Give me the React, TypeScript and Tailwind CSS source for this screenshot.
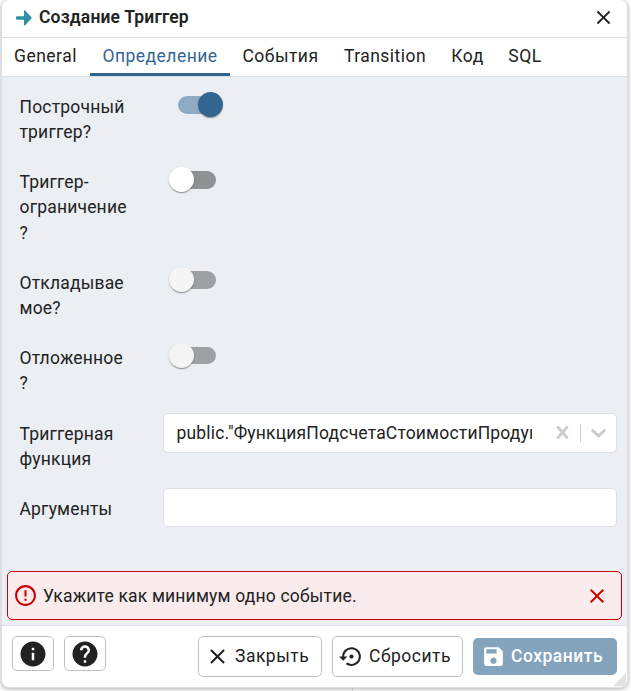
import React, { useState } from 'react';
import clsx from 'clsx';
import {
  MdClose,
  MdErrorOutline,
  MdHelp,
  MdInfo,
  MdSave,
  MdSettingsBackupRestore,
} from 'react-icons/md';

const tabs = [
  { name: 'General', width: 'w-[89px]' },
  { name: 'Определение', width: 'w-[140px]' },
  { name: 'События', width: 'w-[101px]' },
  { name: 'Transition', width: 'w-[108px]' },
  { name: 'Код', width: 'w-[57px]' },
  { name: 'SQL', width: 'w-[58px]' },
];

function TriggerIcon() {
  return (
    <svg className="w-4 h-4" viewBox="0 0 16 16" fill="#2c91a3">
      <path d="M1 6.3h7V1c0-.8.7-1 1.2-.5l6.2 6.7c.4.4.4 1 0 1.4l-6.2 6.7c-.5.5-1.2.3-1.2-.5V9.7H1C.4 9.7 0 9.3 0 8.8V7.2c0-.5.4-.9 1-.9z" />
    </svg>
  );
}

type SwitchProps = {
  checked?: boolean;
  disabled?: boolean;
  onClick?: () => void;
};

function Switch({ checked, disabled, onClick }: SwitchProps) {
  return (
    <button
      role="switch"
      aria-checked={!!checked}
      disabled={disabled}
      onClick={onClick}
      className={clsx(
        'relative block w-[42.5px] h-[17.5px] rounded-full',
        checked ? 'bg-[#8fabc3]' : disabled ? 'bg-[#9fa0a4]' : 'bg-[#909195]'
      )}
    >
      <span
        className={clsx(
          'absolute -top-[4px] w-[25px] h-[25px] rounded-full shadow-[0_2px_1px_-1px_rgba(0,0,0,0.2),0_1px_1px_0_rgba(0,0,0,0.14),0_1px_3px_0_rgba(0,0,0,0.12)]',
          checked ? 'left-[20px] bg-[#326690]' : '-left-[5px]',
          !checked && (disabled ? 'bg-[#f5f5f5]' : 'bg-white')
        )}
      />
    </button>
  );
}

function Field({ label, children }: { label: string; children: React.ReactNode }) {
  return (
    <div className="flex">
      <div className="w-[108px] mr-[35.5px] shrink-0 break-words">{label}</div>
      <div className="flex-1 min-w-0">{children}</div>
    </div>
  );
}

export default function App() {
  const [activeTab, setActiveTab] = useState('Определение');
  const [forEachRow, setForEachRow] = useState(true);
  const [constraint, setConstraint] = useState(false);

  return (
    <div className="h-[691px] overflow-hidden bg-[#fcfcfc] pl-px font-['Roboto',sans-serif] text-[17.5px] leading-[25.1px] tracking-[0.18px] text-[#222]">
      <div className="relative flex flex-col w-[627px] h-[688px] bg-white border border-t-0 border-[#dde0e6] rounded-lg shadow-[0_1px_4px_rgba(0,0,0,0.3)] overflow-hidden">
        <div className="flex items-center h-[38px] shrink-0 pl-[14px] pr-[12.5px] pb-[2px] border-b border-[#dde0e6]">
          <TriggerIcon />
          <span className="ml-[7px] font-semibold tracking-[0.15px]">Создание Триггер</span>
          <button className="ml-auto" aria-label="Close">
            <MdClose className="w-[23px] h-[23px]" />
          </button>
        </div>

        <div className="flex h-[39px] shrink-0 -ml-px border-b border-[#dde0e6]">
          {tabs.map((tab) => (
            <button
              key={tab.name}
              onClick={() => setActiveTab(tab.name)}
              className={clsx(
                'h-[38px] pt-[2px] text-center whitespace-nowrap tracking-[0.47px] border-b-[3px]',
                tab.width,
                activeTab === tab.name ? 'text-[#326690] border-[#326690]' : 'border-transparent'
              )}
            >
              {tab.name}
            </button>
          ))}
        </div>

        <div className="flex-1 min-h-0 flex flex-col bg-[#ebeef3]">
          <div className="flex flex-col gap-[25.2px] pl-[17.5px] pr-[10px] pt-[18px]">
            <Field label="Построчный триггер?">
              <div className="pl-[14.5px] pt-[1px]">
                <Switch checked={forEachRow} onClick={() => setForEachRow(!forEachRow)} />
              </div>
            </Field>
            <Field label="Триггер-ограничение?">
              <div className="pl-[10.5px] pt-[1px]">
                <Switch checked={constraint} onClick={() => setConstraint(!constraint)} />
              </div>
            </Field>
            <Field label="Откладываемое?">
              <div className="pl-[10.5px] pt-[0.5px]">
                <Switch disabled />
              </div>
            </Field>
            <Field label="Отложенное?">
              <div className="pl-[10.5px] pt-[0.5px]">
                <Switch disabled />
              </div>
            </Field>
            <Field label="Триггерная функция">
              <div className="-mt-[9px] -mb-2 flex items-center h-[40px] bg-white border border-[#dde0e6] rounded-[5px]">
                <div className="ml-[12.5px] w-[355.5px] pt-[2px] overflow-hidden whitespace-nowrap">
                  public."ФункцияПодсчетаСтоимостиПродукции"
                </div>
                <svg className="ml-[18px] w-[25px] h-[25px] shrink-0" viewBox="0 0 20 20" fill="#ccc">
                  <path d="M14.348 14.849c-0.469 0.469-1.229 0.469-1.697 0l-2.651-3.030-2.651 3.029c-0.469 0.469-1.229 0.469-1.697 0-0.469-0.469-0.469-1.229 0-1.697l2.758-3.15-2.759-3.152c-0.469-0.469-0.469-1.228 0-1.697s1.228-0.469 1.697 0l2.652 3.031 2.651-3.031c0.469-0.469 1.228-0.469 1.697 0s0.469 1.229 0 1.697l-2.758 3.152 2.758 3.15c0.469 0.469 0.469 1.229 0 1.698z" />
                </svg>
                <span className="ml-[5px] w-px h-[18px] shrink-0 bg-[#ccc]" />
                <svg className="ml-[5px] w-[25px] h-[25px] shrink-0" viewBox="0 0 20 20" fill="#ccc">
                  <path d="M4.516 7.548c0.436-0.446 1.043-0.481 1.576 0l3.908 3.747 3.908-3.747c0.533-0.481 1.141-0.446 1.574 0 0.436 0.445 0.408 1.197 0 1.615-0.406 0.418-4.695 4.502-4.695 4.502-0.217 0.223-0.502 0.335-0.787 0.335s-0.57-0.112-0.789-0.335c0 0-4.287-4.084-4.695-4.502s-0.436-1.17 0-1.615z" />
                </svg>
              </div>
            </Field>
            <Field label="Аргументы">
              <input
                type="text"
                aria-label="Аргументы"
                className="block -mt-[9px] w-full h-[39px] px-3 bg-white border border-[#dde0e6] rounded-[5px] outline-none"
              />
            </Field>
          </div>

          <div className="mt-auto mb-[5px] mx-[5px] flex items-center h-[49px] shrink-0 pl-[5px] pr-[12px] bg-[#faecec] border border-[#cc0000] rounded-[5px]">
            <MdErrorOutline className="w-[25px] h-[25px] text-[#cc0000]" />
            <span className="ml-[5px] pt-[2px]">Укажите как минимум одно событие.</span>
            <button className="ml-auto text-[#cc0000]" aria-label="Dismiss">
              <MdClose className="w-[24px] h-[24px]" />
            </button>
          </div>
        </div>

        <div className="flex items-start h-[62px] shrink-0 pl-[10px] pr-[10px] pt-[10px] border-t border-[#dde0e6] tracking-[0.5px]">
          <button className="flex items-center justify-center w-[42px] h-[35px] border border-[#bac1cd] rounded-[5px]" aria-label="Info">
            <MdInfo className="w-[30px] h-[30px]" />
          </button>
          <button className="ml-[10px] flex items-center justify-center w-[42px] h-[35px] border border-[#bac1cd] rounded-[5px]" aria-label="Help">
            <MdHelp className="w-[30px] h-[30px]" />
          </button>
          <button className="ml-auto flex items-center w-[124px] h-[41px] pl-[6px] border border-[#bac1cd] rounded-[5px]">
            <MdClose className="w-[25px] h-[25px]" />
            <span className="ml-[5px]">Закрыть</span>
          </button>
          <button className="ml-[10px] flex items-center w-[131px] h-[41px] pl-[6px] border border-[#bac1cd] rounded-[5px]">
            <MdSettingsBackupRestore className="w-[25px] h-[25px]" />
            <span className="ml-[5px]">Сбросить</span>
          </button>
          <button className="ml-[10px] mt-[2px] flex items-center w-[144px] h-[37px] pl-[8px] bg-[#84a3bc] text-white font-medium rounded-[5px]">
            <MdSave className="w-[25px] h-[25px]" />
            <span className="ml-[5px]">Сохранить</span>
          </button>
        </div>

        {/* resize handle */}
        <svg className="absolute right-[1px] bottom-[1px] w-[13px] h-[13px]" viewBox="0 0 13 13" fill="#e2e2e2">
          <path d="M13 0v13H0z" />
        </svg>
      </div>
      <div className="ml-[351px] w-px h-[3px] bg-[#dde0e6]" />
    </div>
  );
}
